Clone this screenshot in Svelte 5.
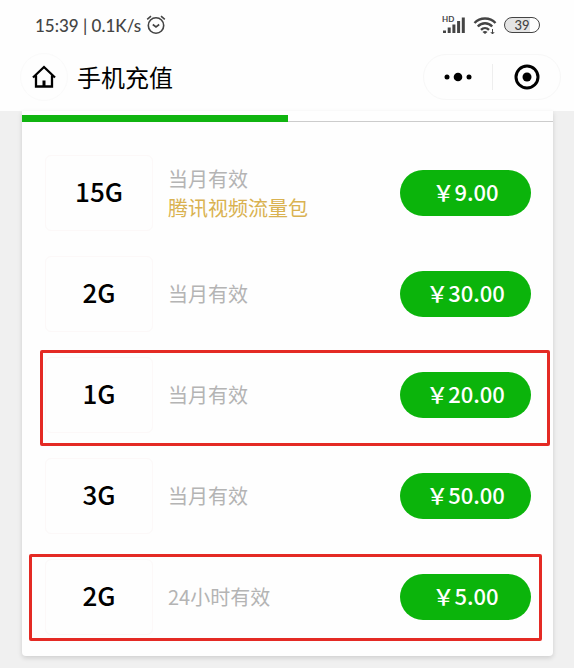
<script lang="ts">
  type Plan = {
    size: string;
    validity: string;
    note?: string;
    price: string;
    mark?: "wide" | "tall";
  };

  const plans: Plan[] = [
    { size: "15G", validity: "当月有效", note: "腾讯视频流量包", price: "9.00" },
    { size: "2G", validity: "当月有效", price: "30.00" },
    { size: "1G", validity: "当月有效", price: "20.00", mark: "tall" },
    { size: "3G", validity: "当月有效", price: "50.00" },
    { size: "2G", validity: "24小时有效", price: "5.00", mark: "wide" },
  ];
</script>

<div class="page">
  <header class="top">
    <div class="status">
      <div class="status-group">
        <span>15:39 | 0.1K/s</span>
        <svg class="alarm" width="20" height="20" viewBox="0 0 20 20" aria-hidden="true">
          <circle cx="10" cy="10.5" r="7.7" />
          <path d="M6.8 9.5 10 12l3.2-2.5M1.2 4.4 5 1.2M18.8 4.4 15 1.2" />
        </svg>
      </div>
      <div class="status-group right">
        <svg width="24" height="20" viewBox="0 0 24 20" aria-hidden="true">
          <text class="hd" x="0" y="7">HD</text>
          <path
            class="bars"
            d="M2.500 18v-2.500M7.2 18v-5.5M11.9 18V9.5M16.6 18V6M21.300 18V2.5"
          />
        </svg>
        <svg width="24" height="20" viewBox="0 0 24 20" aria-hidden="true">
          <path class="waves" d="M1.5 8c5.5-6 15.5-6 21 0M4.8 11.5c4-4.3 10.4-4.3 14.4 0M8 14.8c2.3-2.3 5.7-2.3 8 0" />
          <path class="dot" d="M9.5 17c1.5-1.5 3.5-1.5 5 0L12 19z" />
          <path class="arrow" d="M19.5 14v5M17.8 17l1.7 2 1.7-2" />
        </svg>
        <span class="battery">39</span>
      </div>
    </div>

    <div class="nav">
      <button class="home" aria-label="首页">
        <svg width="24" height="24" viewBox="0 0 24 24" aria-hidden="true">
          <path d="M1 12.5 12 2l11 10.5M4 10.5v11h16v-11" />
          <path d="M12 15.5V21" class="door" />
        </svg>
      </button>
      <h1>手机充值</h1>
      <div class="capsule">
        <button aria-label="更多">
          <svg width="28" height="10" viewBox="0 0 28 10" aria-hidden="true">
            <circle cx="3" cy="5" r="2.5" />
            <circle cx="14" cy="5" r="4.3" />
            <circle cx="25" cy="5" r="2.5" />
          </svg>
        </button>
        <button aria-label="关闭">
          <svg width="26" height="26" viewBox="0 0 26 26" aria-hidden="true">
            <circle class="ring" cx="13" cy="13" r="11" />
            <circle cx="13" cy="13" r="4.5" />
          </svg>
        </button>
      </div>
    </div>
  </header>

  <main class="card">
    <div class="tabs"><div class="tab-line"></div></div>
    <ul>
      {#each plans as plan}
        <li class={plan.mark ? `plan mark-${plan.mark}` : "plan"}>
          <div class="size">{plan.size}</div>
          <div class="info">
            <div>{plan.validity}</div>
            {#if plan.note}
              <div class="note">{plan.note}</div>
            {/if}
          </div>
          <button class="buy">￥{plan.price}</button>
        </li>
      {/each}
    </ul>
  </main>
</div>

<style>
  :global(body) {
    margin: 0;
    background: #f0f0f0;
  }

  .page {
    font-family: "Noto Sans CJK SC", sans-serif;
    color: #000;
    padding-bottom: 12px;
  }

  button {
    border: 0;
    padding: 0;
    font: inherit;
    color: inherit;
    background: transparent;
    cursor: pointer;
  }

  svg {
    display: block;
    fill: none;
    stroke: none;
  }

  .top {
    background: #fefefe;
    padding: 11px 13px 10px 20px;
  }

  .status {
    display: flex;
    justify-content: space-between;
    align-items: center;
    height: 28px;
    padding: 0 21px 0 15px;
    font-family: Lato, sans-serif;
    font-size: 17px;
    font-weight: 500;
    color: #444;
  }

  .status-group {
    display: flex;
    align-items: center;
    gap: 5px;
  }

  .status-group.right {
    gap: 7px;
  }

  .alarm {
    stroke: #444;
    stroke-width: 1.6;
  }

  .hd {
    font-size: 8px;
    font-weight: 700;
    fill: #444;
  }

  .bars {
    stroke: #444;
    stroke-width: 3;
  }

  .waves {
    stroke: #444;
    stroke-width: 2.4;
  }

  .dot {
    fill: #444;
  }

  .arrow {
    stroke: #444;
    stroke-width: 1;
  }

  .battery {
    box-sizing: border-box;
    width: 36px;
    height: 16px;
    border: 1px solid #444;
    border-radius: 8px;
    background: linear-gradient(90deg, #e4e4e4 75%, #fefefe 75%);
    font-size: 13px;
    font-weight: 500;
    line-height: 14px;
    text-align: center;
  }

  .nav {
    display: flex;
    align-items: center;
    margin-top: 14px;
  }

  .home {
    display: grid;
    place-items: center;
    width: 48px;
    height: 48px;
    border: 1px solid #fafafa;
    border-radius: 24px;
    box-sizing: border-box;
  }

  .home path {
    stroke: #000;
    stroke-width: 2.3;
  }

  .home .door {
    stroke-width: 3;
  }

  h1 {
    margin: 0 auto 0 9px;
    font-size: 24px;
    font-weight: 400;
    line-height: 36px;
  }

  .capsule {
    display: grid;
    grid-template-columns: 1fr 1fr;
    box-sizing: border-box;
    width: 138px;
    height: 46px;
    border: 1px solid #f7f7f7;
    border-radius: 23px;
  }

  .capsule button {
    display: grid;
    place-items: center;
    margin: 9px 0;
  }

  .capsule button + button {
    border-left: 1px solid #eee;
  }

  .capsule circle {
    fill: #000;
  }

  .capsule .ring {
    fill: none;
    stroke: #000;
    stroke-width: 3;
  }

  .card {
    margin: 0 21px 0 22px;
    padding-bottom: 9px;
    background: #fefefe;
    border-radius: 0 0 4px 4px;
    box-shadow: 0 2px 5px rgba(0, 0, 0, 0.14);
  }

  .tabs {
    padding-top: 4px;
    border-bottom: 1px solid #ccc;
  }

  .tab-line {
    width: 50%;
    height: 7px;
    margin-bottom: -1px;
    background: #10b410;
  }

  ul {
    margin: 0;
    padding: 20px 22px 0 23px;
    list-style: none;
  }

  .plan {
    position: relative;
    display: flex;
    align-items: center;
    height: 101px;
  }

  .size {
    display: grid;
    place-items: center;
    box-sizing: border-box;
    width: 108px;
    height: 76px;
    padding-bottom: 4px;
    border: 1px solid #fcf8f8;
    border-radius: 6px;
    font-size: 26px;
    font-weight: 500;
  }

  .info {
    flex: 1;
    padding-left: 15px;
    font-size: 20px;
    font-weight: 400;
    line-height: 29px;
    color: #b4b4b4;
  }

  .note {
    color: #d9b250;
  }

  .buy {
    box-sizing: border-box;
    width: 131px;
    height: 46px;
    padding-bottom: 4px;
    border-radius: 23px;
    background: #0bb40b;
    color: #fff;
    font-size: 22px;
    font-weight: 500;
    line-height: 42px;
  }

  .mark-tall::after,
  .mark-wide::after {
    content: "";
    position: absolute;
    border: 3px solid #e42a24;
    border-radius: 2px;
    pointer-events: none;
  }

  .mark-tall::after {
    inset: 6px -19px -1px -5px;
  }

  .mark-wide::after {
    inset: 8px -11px 6px -16px;
  }
</style>
